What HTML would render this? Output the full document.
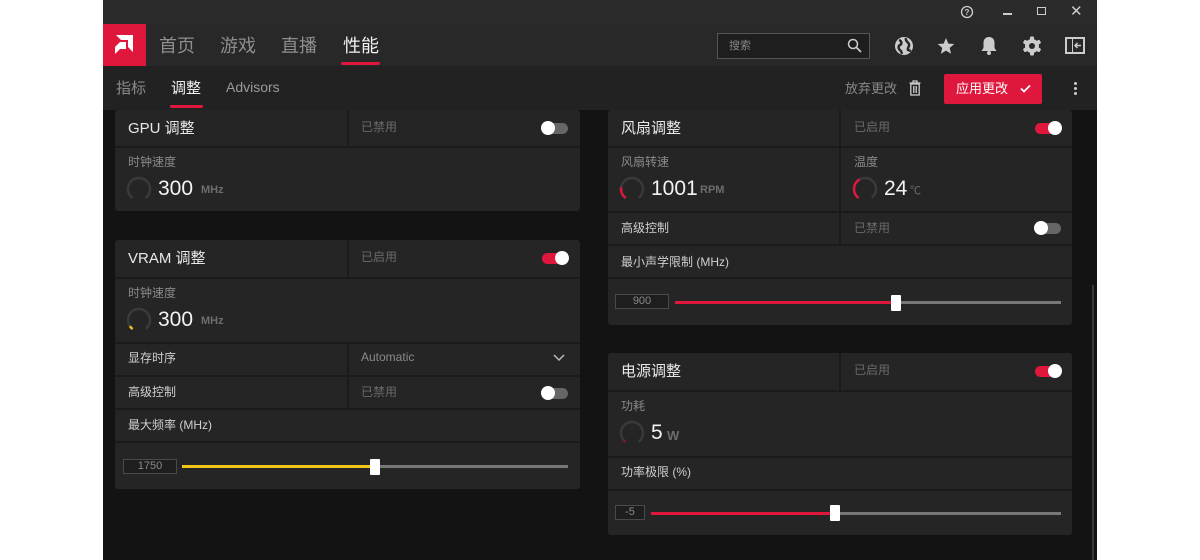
<!DOCTYPE html>
<html><head><meta charset="utf-8"><style>
*{margin:0;padding:0;box-sizing:border-box}
body{width:1200px;height:560px;background:#fff;position:relative;overflow:hidden;font-family:"Liberation Sans","Noto Sans CJK SC",sans-serif}
.a{position:absolute}
#app{left:103px;top:0;width:994px;height:560px;background:#131313;overflow:hidden}
.t{position:absolute;white-space:nowrap;transform:translateY(-2px)}
.card{position:absolute;background:#252525;border-radius:3px}
.row{position:absolute;left:0;right:0;border-top:2px solid #1b1b1b}
.vd{position:absolute;width:2px;background:#1b1b1b}
.h{color:#e8e8e8;font-size:15px}
.lb{color:#8a8a8a;font-size:12px}
.lw{color:#cfcfcf;font-size:12px}
.dis{color:#6a6a6a;font-size:12px}
.big{color:#f2f2f2;font-size:21px;transform:none}
.unit{color:#6d6d6d;font-size:11px;font-weight:bold;transform:none}
.tg{position:absolute;width:26px;height:11px;border-radius:6px}
.tg i{position:absolute;top:-2px;width:14px;height:14px;border-radius:50%;background:#fff}
.box{position:absolute;border:1px solid #4a4a4a;background:#1e1e1e;color:#8a8a8a;font-size:11px;text-align:center;height:15px;line-height:13px}
.tr{position:absolute;height:3px;background:#777}
.th{position:absolute;width:10px;height:16px;background:#fff;border-radius:1px}
</style></head><body>
<div id="app" class="a">
 <div class="a" style="left:0;top:0;width:994px;height:24px;background:#2b2b2b"></div>
 <svg class="a" style="left:857px;top:5px" width="14" height="14"><circle cx="7" cy="7" r="5.5" fill="none" stroke="#ccc" stroke-width="1.3"/><text x="7" y="10" font-size="8" fill="#ccc" text-anchor="middle" font-family="Liberation Sans" font-weight="bold">?</text></svg>
 <div class="a" style="left:900px;top:13px;width:9px;height:1.5px;background:#ccc"></div>
 <div class="a" style="left:934px;top:7px;width:9px;height:8px;border:1.5px solid #ccc"></div>
 <div class="t" style="left:967px;top:4px;color:#ccc;font-size:15px">✕</div>
 <div class="a" style="left:0;top:24px;width:994px;height:42px;background:#282828;box-shadow:0 2px 3px rgba(0,0,0,.5)"></div>
 <div class="a" style="left:0;top:24px;width:43px;height:42px;background:#e0173c"></div>
 <svg class="a" style="left:11px;top:35px" width="21" height="20"><path d="M2 0H19V17L14 12V5H7Z" fill="#fff"/><path d="M6 7H12V14H6L1 19V12Z" fill="#fff"/></svg>
 <div class="t" style="left:56px;top:34px;font-size:18px;color:#8e8e8e">首页</div>
 <div class="t" style="left:117px;top:34px;font-size:18px;color:#8e8e8e">游戏</div>
 <div class="t" style="left:178px;top:34px;font-size:18px;color:#8e8e8e">直播</div>
 <div class="t" style="left:240px;top:34px;font-size:18px;color:#f0f0f0">性能</div>
 <div class="a" style="left:238px;top:62px;width:39px;height:3px;background:#e0173c;border-radius:2px"></div>
 <div class="a" style="left:614px;top:33px;width:153px;height:26px;border:1px solid #555;background:#1e1e1e"></div>
 <div class="t" style="left:626px;top:39px;font-size:11px;color:#888">搜索</div>
 <svg class="a" style="left:744px;top:38px" width="15" height="15"><circle cx="6" cy="6" r="4.5" fill="none" stroke="#ccc" stroke-width="1.5"/><path d="M9.5 9.5L14 14" stroke="#ccc" stroke-width="1.8"/></svg>
 <svg class="a" style="left:791px;top:36px" width="20" height="20"><circle cx="10" cy="10" r="9" fill="#ccc"/><path d="M5 4C8 5 8 8 6 9S4 13 7 15L8 18M12 2C11 5 14 6 15 8S13 12 14 14L17 15" stroke="#282828" stroke-width="2.5" fill="none"/></svg>
 <svg class="a" style="left:834px;top:37px" width="18" height="18"><path d="M9 1L11.3 6.6L17.3 7L12.7 10.9L14.1 16.8L9 13.6L3.9 16.8L5.3 10.9L0.7 7L6.7 6.6Z" fill="#ccc"/></svg>
 <svg class="a" style="left:877px;top:36px" width="18" height="20"><path d="M9 1C5 1 3.5 4 3.5 7V12L1.5 15H16.5L14.5 12V7C14.5 4 13 1 9 1Z" fill="#ccc"/><circle cx="9" cy="17" r="2" fill="#ccc"/></svg>
 <svg class="a" style="left:919px;top:36px" width="20" height="20"><g fill="#ccc"><circle cx="10" cy="10" r="7"/><rect x="8" y="0.5" width="4" height="19" rx="1"/><rect x="8" y="0.5" width="4" height="19" rx="1" transform="rotate(60 10 10)"/><rect x="8" y="0.5" width="4" height="19" rx="1" transform="rotate(120 10 10)"/></g><circle cx="10" cy="10" r="3" fill="#282828"/></svg>
 <svg class="a" style="left:962px;top:37px" width="20" height="17"><rect x="0" y="0" width="20" height="17" fill="#ccc"/><rect x="2" y="2" width="5" height="13" fill="#282828"/><rect x="8" y="2" width="10" height="13" fill="#282828"/><path d="M16 8.5H10M12.5 6L10 8.5L12.5 11" stroke="#ccc" stroke-width="1.5" fill="none"/></svg>
 <div class="a" style="left:0;top:66px;width:994px;height:44px;background:#222"></div>
 <div class="t" style="left:13px;top:79px;font-size:15px;color:#8a8a8a">指标</div>
 <div class="t" style="left:68px;top:79px;font-size:15px;color:#f0f0f0">调整</div>
 <div class="a" style="left:67px;top:105px;width:33px;height:3px;background:#e0173c;border-radius:2px"></div>
 <div class="t" style="left:123px;top:81px;font-size:14px;color:#9a9a9a">Advisors</div>
 <div class="t" style="left:742px;top:80px;font-size:13px;color:#888">放弃更改</div>
 <svg class="a" style="left:806px;top:80px" width="12" height="16"><path d="M0.5 3H11.5M4 3V1H8V3" stroke="#ccc" stroke-width="1.3" fill="none"/><rect x="1.8" y="4" width="8.4" height="11" fill="none" stroke="#ccc" stroke-width="1.3"/><path d="M4.5 6V13M6 6V13M7.5 6V13" stroke="#ccc" stroke-width="0.9"/></svg>
 <div class="a" style="left:841px;top:74px;width:98px;height:30px;background:#e0173c;border-radius:2px"></div>
 <div class="t" style="left:853px;top:80px;font-size:13px;color:#fff">应用更改</div>
 <svg class="a" style="left:917px;top:84px" width="11" height="9"><path d="M1 4.5L4 7.5L10 1.5" stroke="#fff" stroke-width="1.8" fill="none"/></svg>
 <div class="a" style="left:971px;top:82px;width:3px;height:3px;background:#ccc;border-radius:50%;box-shadow:0 5px 0 #ccc,0 10px 0 #ccc"></div>

 <div class="card" style="left:12px;top:110px;width:465px;height:101px">
  <div class="vd" style="left:232px;top:0;height:37px"></div>
  <div class="t h" style="left:13px;top:9px">GPU 调整</div>
  <div class="t dis" style="left:246px;top:10px">已禁用</div>
  <div class="tg" style="left:427px;top:13px;background:#666"><i style="left:-1px"></i></div>
  <div class="row" style="top:36px"></div>
  <div class="t lb" style="left:13px;top:45px">时钟速度</div>
  <svg class="a" style="left:11px;top:66px" width="26" height="26"><circle cx="13" cy="13" r="11" fill="none" stroke="#3a3a3a" stroke-width="2.5" stroke-dasharray="55 14" transform="rotate(125 13 13)"/></svg>
  <div class="t big" style="left:43px;top:67px">300</div>
  <div class="t unit" style="left:86px;top:74px">MHz</div>
 </div>

 <div class="card" style="left:12px;top:240px;width:465px;height:249px">
  <div class="vd" style="left:232px;top:0;height:37px"></div>
  <div class="t h" style="left:13px;top:9px">VRAM 调整</div>
  <div class="t dis" style="left:246px;top:10px">已启用</div>
  <div class="tg" style="left:427px;top:13px;background:#e0173c"><i style="left:13px"></i></div>
  <div class="row" style="top:37px"></div>
  <div class="t lb" style="left:13px;top:46px">时钟速度</div>
  <svg class="a" style="left:11px;top:67px" width="26" height="26"><circle cx="13" cy="13" r="11" fill="none" stroke="#3a3a3a" stroke-width="2.5" stroke-dasharray="55 14" transform="rotate(125 13 13)"/><circle cx="13" cy="13" r="11" fill="none" stroke="#f0c419" stroke-width="2.5" stroke-dasharray="4 65" transform="rotate(125 13 13)"/></svg>
  <div class="t big" style="left:43px;top:68px">300</div>
  <div class="t unit" style="left:86px;top:75px">MHz</div>
  <div class="row" style="top:102px"></div>
  <div class="vd" style="left:232px;top:104px;height:66px"></div>
  <div class="t lw" style="left:13px;top:111px">显存时序</div>
  <div class="t dis" style="left:246px;top:112px;color:#8a8a8a">Automatic</div>
  <svg class="a" style="left:438px;top:114px" width="12" height="8"><path d="M1 1L6 6L11 1" stroke="#bbb" stroke-width="1.5" fill="none"/></svg>
  <div class="row" style="top:135px"></div>
  <div class="t lw" style="left:13px;top:145px">高级控制</div>
  <div class="t dis" style="left:246px;top:145px">已禁用</div>
  <div class="tg" style="left:427px;top:148px;background:#666"><i style="left:-1px"></i></div>
  <div class="row" style="top:168px"></div>
  <div class="t lw" style="left:13px;top:178px">最大频率 (MHz)</div>
  <div class="row" style="top:201px"></div>
  <div class="box" style="left:8px;top:219px;width:54px">1750</div>
  <div class="tr" style="left:67px;top:225px;width:386px"></div>
  <div class="tr" style="left:67px;top:225px;width:193px;background:#f0c419"></div>
  <div class="th" style="left:255px;top:219px"></div>
 </div>

 <div class="card" style="left:505px;top:110px;width:464px;height:215px">
  <div class="vd" style="left:231px;top:0;height:102px"></div>
  <div class="t h" style="left:13px;top:9px">风扇调整</div>
  <div class="t dis" style="left:246px;top:10px">已启用</div>
  <div class="tg" style="left:427px;top:13px;background:#e0173c"><i style="left:13px"></i></div>
  <div class="row" style="top:36px"></div>
  <div class="t lb" style="left:13px;top:45px">风扇转速</div>
  <svg class="a" style="left:11px;top:66px" width="26" height="26"><circle cx="13" cy="13" r="11" fill="none" stroke="#3a3a3a" stroke-width="2.5" stroke-dasharray="55 14" transform="rotate(125 13 13)"/><circle cx="13" cy="13" r="11" fill="none" stroke="#e0173c" stroke-width="2.5" stroke-dasharray="12 60" transform="rotate(125 13 13)"/></svg>
  <div class="t big" style="left:43px;top:67px">1001</div>
  <div class="t unit" style="left:92px;top:74px">RPM</div>
  <div class="t lb" style="left:246px;top:45px">温度</div>
  <svg class="a" style="left:244px;top:66px" width="26" height="26"><circle cx="13" cy="13" r="11" fill="none" stroke="#3a3a3a" stroke-width="2.5" stroke-dasharray="55 14" transform="rotate(125 13 13)"/><circle cx="13" cy="13" r="11" fill="none" stroke="#e0173c" stroke-width="2.5" stroke-dasharray="22 60" transform="rotate(125 13 13)"/></svg>
  <div class="t big" style="left:276px;top:67px">24</div>
  <div class="t unit" style="left:302px;top:72px;font-weight:normal">℃</div>
  <div class="row" style="top:101px"></div>
  <div class="vd" style="left:231px;top:103px;height:33px"></div>
  <div class="t lw" style="left:13px;top:111px">高级控制</div>
  <div class="t dis" style="left:246px;top:111px">已禁用</div>
  <div class="tg" style="left:427px;top:113px;background:#666"><i style="left:-1px"></i></div>
  <div class="row" style="top:134px"></div>
  <div class="t lw" style="left:13px;top:145px">最小声学限制 (MHz)</div>
  <div class="row" style="top:167px"></div>
  <div class="box" style="left:7px;top:184px;width:54px">900</div>
  <div class="tr" style="left:67px;top:191px;width:386px"></div>
  <div class="tr" style="left:67px;top:191px;width:222px;background:#e0173c"></div>
  <div class="th" style="left:283px;top:185px"></div>
 </div>

 <div class="card" style="left:505px;top:353px;width:464px;height:182px">
  <div class="vd" style="left:231px;top:0;height:38px"></div>
  <div class="t h" style="left:13px;top:9px">电源调整</div>
  <div class="t dis" style="left:246px;top:10px">已启用</div>
  <div class="tg" style="left:427px;top:13px;background:#e0173c"><i style="left:13px"></i></div>
  <div class="row" style="top:37px"></div>
  <div class="t lb" style="left:13px;top:46px">功耗</div>
  <svg class="a" style="left:11px;top:67px" width="26" height="26"><circle cx="13" cy="13" r="11" fill="none" stroke="#3a3a3a" stroke-width="2.5" stroke-dasharray="55 14" transform="rotate(125 13 13)"/><circle cx="13" cy="13" r="11" fill="none" stroke="#7a1a25" stroke-width="2.5" stroke-dasharray="3 66" transform="rotate(125 13 13)"/></svg>
  <div class="t big" style="left:43px;top:68px">5</div>
  <div class="t unit" style="left:59px;top:75px;font-size:13px">W</div>
  <div class="row" style="top:103px"></div>
  <div class="t lw" style="left:13px;top:112px">功率极限 (%)</div>
  <div class="row" style="top:136px"></div>
  <div class="box" style="left:7px;top:152px;width:30px">-5</div>
  <div class="tr" style="left:43px;top:159px;width:410px"></div>
  <div class="tr" style="left:43px;top:159px;width:185px;background:#e0173c"></div>
  <div class="th" style="left:222px;top:152px"></div>
 </div>
 <div class="a" style="left:989px;top:285px;width:2px;height:275px;background:#3a3a3a"></div>
</div>
</body></html>
